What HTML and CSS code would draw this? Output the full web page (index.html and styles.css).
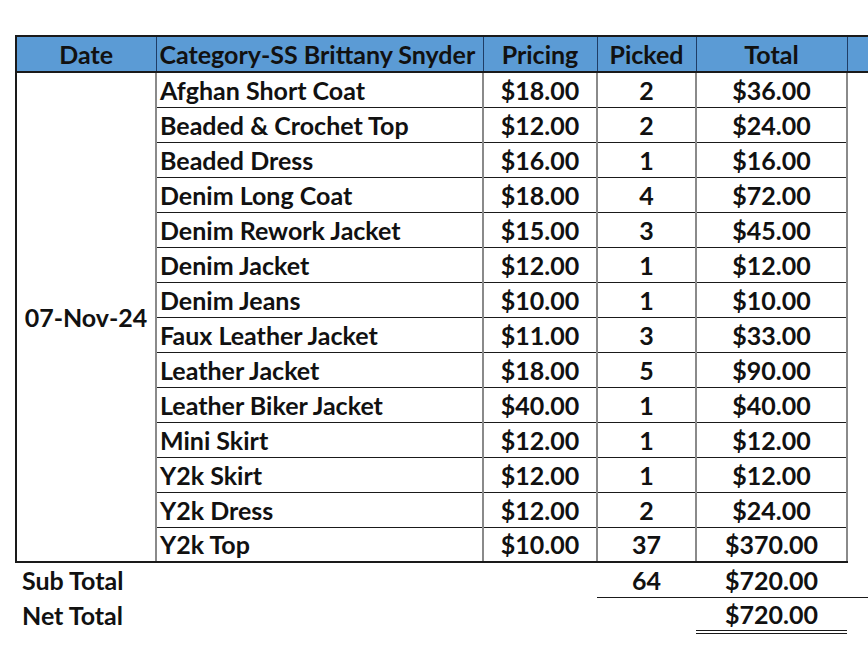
FILE: index.html
```html
<!DOCTYPE html>
<html>
<head>
<meta charset="utf-8">
<link rel="stylesheet" href="styles.css">
</head>
<body>
<div class="page">
<table class="sheet">
  <colgroup>
    <col class="c-date"><col class="c-cat"><col class="c-price"><col class="c-pick"><col class="c-total"><col class="c-extra">
  </colgroup>
  <thead>
    <tr class="head">
      <th>Date</th>
      <th class="left">Category-SS Brittany Snyder</th>
      <th>Pricing</th>
      <th>Picked</th>
      <th>Total</th>
      <th class="extra"></th>
    </tr>
  </thead>
  <tbody class="body">
    <tr><td class="date" rowspan="14">07-Nov-24</td><td class="left">Afghan Short Coat</td><td>$18.00</td><td>2</td><td>$36.00</td><td class="extra"></td></tr>
    <tr><td class="left">Beaded &amp; Crochet Top</td><td>$12.00</td><td>2</td><td>$24.00</td><td class="extra"></td></tr>
    <tr><td class="left">Beaded Dress</td><td>$16.00</td><td>1</td><td>$16.00</td><td class="extra"></td></tr>
    <tr><td class="left">Denim Long Coat</td><td>$18.00</td><td>4</td><td>$72.00</td><td class="extra"></td></tr>
    <tr><td class="left">Denim Rework Jacket</td><td>$15.00</td><td>3</td><td>$45.00</td><td class="extra"></td></tr>
    <tr><td class="left">Denim Jacket</td><td>$12.00</td><td>1</td><td>$12.00</td><td class="extra"></td></tr>
    <tr><td class="left">Denim Jeans</td><td>$10.00</td><td>1</td><td>$10.00</td><td class="extra"></td></tr>
    <tr><td class="left">Faux Leather Jacket</td><td>$11.00</td><td>3</td><td>$33.00</td><td class="extra"></td></tr>
    <tr><td class="left">Leather Jacket</td><td>$18.00</td><td>5</td><td>$90.00</td><td class="extra"></td></tr>
    <tr><td class="left">Leather Biker Jacket</td><td>$40.00</td><td>1</td><td>$40.00</td><td class="extra"></td></tr>
    <tr><td class="left">Mini Skirt</td><td>$12.00</td><td>1</td><td>$12.00</td><td class="extra"></td></tr>
    <tr><td class="left">Y2k Skirt</td><td>$12.00</td><td>1</td><td>$12.00</td><td class="extra"></td></tr>
    <tr><td class="left">Y2k Dress</td><td>$12.00</td><td>2</td><td>$24.00</td><td class="extra"></td></tr>
    <tr class="last"><td class="left">Y2k Top</td><td>$10.00</td><td>37</td><td>$370.00</td><td class="extra"></td></tr>
  </tbody>
  <tbody class="totals">
    <tr class="sub">
      <td class="label" colspan="3">Sub Total</td>
      <td class="rule">64</td>
      <td class="rule">$720.00</td>
      <td class="rule"></td>
    </tr>
    <tr class="net">
      <td class="label" colspan="4">Net Total</td>
      <td class="double">$720.00</td>
      <td></td>
    </tr>
  </tbody>
</table>
</div>
</body>
</html>
```
FILE: styles.css
```css
html, body {
  margin: 0;
  padding: 0;
  background: #ffffff;
  overflow: hidden;
}
.page {
  width: 868px;
  height: 670px;
  overflow: hidden;
  padding: 35px 0 0 15px;
  box-sizing: border-box;
}
.sheet {
  border-collapse: collapse;
  table-layout: fixed;
  width: 920px;
  font-family: "Lato", "Open Sans", sans-serif;
  font-weight: 700;
  font-size: 25px;
  color: #111;
}
.c-date { width: 140px; }
.c-cat { width: 327px; }
.c-price { width: 114px; }
.c-pick { width: 99px; }
.c-total { width: 151px; }
.c-extra { width: 89px; }

.sheet th, .sheet td {
  padding: 0 3px;
  height: 35px;
  line-height: 30px;
  text-align: center;
  white-space: nowrap;
  overflow: hidden;
  box-sizing: border-box;
}
.sheet .left { text-align: left; }

.head th {
  background: #5b9bd5;
  font-weight: 700;
  border-top: 2px solid #1a1a1a;
  border-bottom: 2px solid #1a1a1a;
  border-left: 1px solid #1f3d66;
  height: 36px;
}
.head th:first-child { border-left: 2px solid #1a1a1a; }

.body td {
  border-top: 1px solid #1a1a1a;
  border-left: 2px solid #8a8a8a;
}
.body td.date {
  border-left: 2px solid #1a1a1a;
  border-bottom: 2px solid #1a1a1a;
}
.body tr.last td { border-bottom: 2px solid #1a1a1a; }
.body td.extra { border-top: none; }
.body tr.last td.extra { border-bottom: none; }

.totals td { border: none; }
.totals td.label { text-align: left; padding-left: 6px; }
.totals td.rule { border-bottom: 1px solid #1a1a1a; }
.totals td.double { border-bottom: 4px double #1a1a1a; }
```
